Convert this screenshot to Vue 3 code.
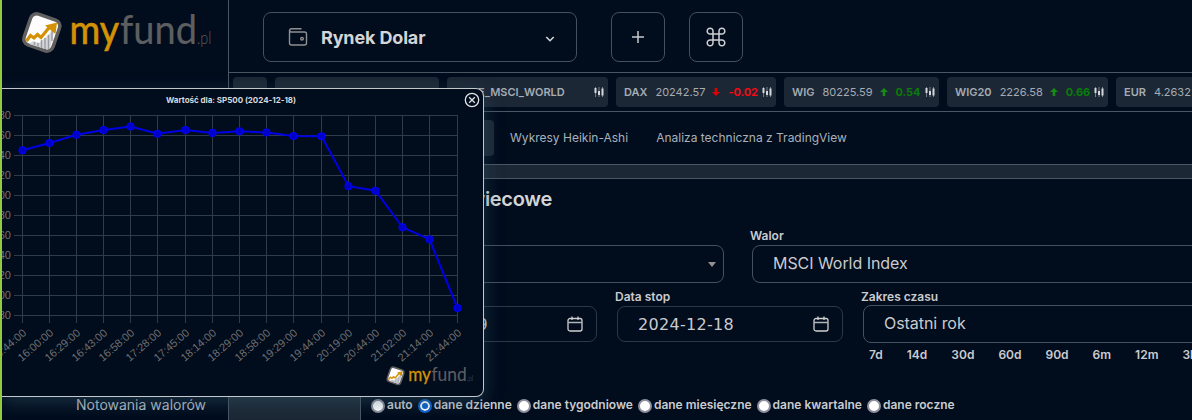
<script setup>
const tickers = [
  { cls: 't1', name: '' },
  { cls: 't2', name: '' },
  { cls: 't3', name: 'E_MSCI_WORLD', icon: true },
  { cls: 't4', name: 'DAX', value: '20242.57', change: '-0.02', down: true, icon: true },
  { cls: 't5', name: 'WIG', value: '80225.59', change: '0.54', icon: true },
  { cls: 't6', name: 'WIG20', value: '2226.58', change: '0.66', icon: true },
  { cls: 't7', name: 'EUR', value: '4.2632' }
]
const ranges = ['7d', '14d', '30d', '60d', '90d', '6m', '12m', '3lata']
const modes = ['auto', 'dane dzienne', 'dane tygodniowe', 'dane miesięczne', 'dane kwartalne', 'dane roczne']

const levels = [6080, 6060, 6040, 6020, 6000, 5980, 5960, 5940, 5920, 5900, 5880]
const points = [
  ['15:44:00', 22.5, 150.3], ['16:00:00', 49.5, 143], ['16:29:00', 76.5, 134.7], ['16:43:00', 103.5, 130],
  ['16:58:00', 130.5, 126.5], ['17:28:00', 157.5, 133.8], ['17:45:00', 185.5, 130], ['18:14:00', 212.5, 132.9],
  ['18:29:00', 239.5, 131.3], ['18:58:00', 266.5, 132.5], ['19:29:00', 293.5, 136], ['19:44:00', 321.5, 136.2],
  ['20:19:00', 348.5, 186.2], ['20:44:00', 375.5, 190.7], ['21:02:00', 402.5, 227.3], ['21:14:00', 429.5, 239.3],
  ['21:44:00', 457.5, 308]
]
const line = points.map(p => p[1] + ',' + p[2]).join(' ')
</script>

<template>
  <div class="page">
    <svg width="0" height="0" class="defs">
      <symbol id="logo" viewBox="0 0 192 50" overflow="visible">
        <g transform="rotate(19 21 24)">
          <rect x="4" y="6.500" width="34" height="36" rx="8" fill="#606060" />
          <rect x="7.500" y="10" width="27" height="29" rx="4.500" fill="#fdfdfd" />
        </g>
        <path d="M8 36 L12 33 L18 35 L25 29 L34 20 L29.500 38 Q28.500 42.500 24 41 Z" fill="#d4d6da" />
        <path d="M13.500 34v3M17 35v3.500M20.500 32v8M24 30v11M27.500 27v14M31 22v11" stroke="#999ca1" stroke-width="1.400" />
        <path d="M5.500 33 L9.500 27.500 L13 30 L16.500 26.500 L20 29.500 L29 18.500" stroke="#d39106" stroke-width="3.200" fill="none" />
        <path d="M24 17.500 L36 14.500 L34.500 26 Z" fill="#d39106" />
        <text class="my" x="48.500" y="36" textLength="49.500" lengthAdjust="spacingAndGlyphs">my</text>
        <text class="fund" x="99" y="36" textLength="77" lengthAdjust="spacingAndGlyphs">fund</text>
        <text class="pl" x="176" y="36" textLength="14.500" lengthAdjust="spacingAndGlyphs">.pl</text>
      </symbol>
      <symbol id="candles" viewBox="0 0 10 10">
        <path d="M1.500 0v10M5 0v10M8.500 0v10" stroke="#8d949c" stroke-width=".8" />
        <path d="M.5 1h2v5h-2zM4 4h2v4h-2zM7.500 1.500h2v7h-2z" fill="#d5d8dc" />
      </symbol>
      <symbol id="calendar" viewBox="0 0 16 16">
        <rect x="1" y="2.500" width="14" height="12.500" rx="2" fill="none" stroke="#d0d0d0" stroke-width="1.300" />
        <path d="M1 6.500h14" stroke="#b0b4b8" stroke-width="1.500" />
        <path d="M5 .5v3.500M11 .5v3.500" stroke="#d0d0d0" stroke-width="1.300" />
      </symbol>
    </svg>

    <aside class="sidebar">
      <svg class="logo" width="192" height="50"><use href="#logo" /></svg>
      <div class="menu-item">Notowania walorów</div>
    </aside>

    <main class="main">
      <header class="header">
        <div class="wallet">
          <svg width="20" height="20" viewBox="0 0 20 20" fill="none" stroke="#8f9091" stroke-width="1.400">
            <path d="M13.500 1.700H3.500a2 2 0 0 0-2 2V16a2 2 0 0 0 2 2h13a2 2 0 0 0 2-2V7a2 2 0 0 0-2-2h-13a1.600 1.600 0 0 1-1.600-1.600" />
            <circle cx="14" cy="11.700" r="1.300" />
          </svg>
          <span>Rynek Dolar</span>
          <svg class="chev" width="10" height="8" viewBox="0 0 10 8"><path d="M1.300 2 5 5.700 8.700 2" fill="none" stroke="#d5d7da" stroke-width="1.600" /></svg>
        </div>
        <div class="square plus">
          <svg width="14" height="14" viewBox="0 0 14 14"><path d="M1 7h12M7 1v12" stroke="#c8c9cb" stroke-width="1.500" /></svg>
        </div>
        <div class="square">
          <svg width="20" height="20" viewBox="0 0 20 20"><path d="M7 7H4.200A2.900 2.900 0 1 1 7 4.200V15.800A2.900 2.900 0 1 1 4.200 13H15.800A2.900 2.900 0 1 1 13 15.800V4.200A2.900 2.900 0 1 1 15.800 7Z" fill="none" stroke="#cfd0d2" stroke-width="1.500" /></svg>
        </div>
      </header>

      <section class="tickers">
        <div v-for="t in tickers" :key="t.cls" class="ticker" :class="t.cls">
          <b>{{ t.name }}</b>
          <span v-if="t.value" class="value">{{ t.value }}</span>
          <svg v-if="t.change" class="arrow" :class="{ down: t.down }" width="8" height="8" viewBox="0 0 8 8"><path d="M4 0 8 4H5.300V8H2.700V4H0Z" /></svg>
          <em v-if="t.change" :class="{ down: t.down }">{{ t.change }}</em>
          <svg v-if="t.icon" class="candles" width="10" height="10"><use href="#candles" /></svg>
        </div>
      </section>

      <nav class="tabs">
        <span class="tab active">Wykresy</span>
        <span class="tab second">Wykresy Heikin-Ashi</span>
        <span class="tab">Analiza techniczna z TradingView</span>
      </nav>
      <div class="band"></div>

      <div class="body">
        <div class="gutter"></div>
        <div class="content">
          <h2>Wykresy świecowe</h2>
          <div class="row first">
            <div class="field f-type">
              <label>&nbsp;</label>
              <div class="select"><i class="caret"></i></div>
            </div>
            <div class="field f-asset">
              <label>Walor</label>
              <div class="select">MSCI World Index</div>
            </div>
          </div>
          <div class="row second-row">
            <div class="field f-start">
              <label>Data start</label>
              <div class="date"><span>2023-12-19</span><svg width="16" height="16"><use href="#calendar" /></svg></div>
            </div>
            <div class="field f-stop">
              <label>Data stop</label>
              <div class="date"><span>2024-12-18</span><svg width="16" height="16"><use href="#calendar" /></svg></div>
            </div>
            <div class="field f-range">
              <label>Zakres czasu</label>
              <div class="select">Ostatni rok</div>
              <div class="chips"><span v-for="r in ranges" :key="r">{{ r }}</span></div>
            </div>
          </div>
          <div class="modes">
            <span v-for="(m, i) in modes" :key="m" class="mode"><i :class="{ on: i === 1 }"></i>{{ m }}</span>
          </div>
        </div>
      </div>
    </main>

    <div class="popup">
      <svg class="chart" width="481" height="307" viewBox="2 89 481 307">
        <text class="title" x="231" y="103" text-anchor="middle" textLength="130">Wartość dla: SP500 (2024-12-18)</text>
        <g class="grid">
          <path v-for="(l, i) in levels" :key="l" :d="`M14 ${115.5 + i * 20}H458`" />
          <path v-for="p in points" :key="p[0]" :d="`M${p[1]} 115V323`" />
        </g>
        <g class="labels">
          <text v-for="(l, i) in levels" :key="l" x="11" :y="118.500 + i * 20" text-anchor="end">{{ l }}</text>
          <text v-for="p in points" :key="p[0]" :transform="`translate(${p[1] + 4.500} 334) rotate(-41)`" text-anchor="end">{{ p[0] }}</text>
        </g>
        <polyline :points="line" fill="none" stroke="#0000e6" stroke-width="2" />
        <circle v-for="p in points" :key="p[0]" :cx="p[1]" :cy="p[2]" r="3.400" fill="#0000c8" stroke="#0000f0" stroke-width="1.300" />
        <g fill="none" stroke="#e2e4e6" stroke-width="1.300">
          <circle cx="472" cy="100" r="6.700" />
          <path d="M469.200 97.200 474.800 102.800M474.800 97.200 469.200 102.800" />
        </g>
        <use href="#logo" x="386" y="364.500" width="88" height="23" />
      </svg>
    </div>
  </div>
</template>

<style>
body { background: #010c1d; overflow: hidden; }
</style>

<style scoped>
* { box-sizing: border-box; }
.page { position: relative; display: flex; width: 1192px; height: 420px; overflow: hidden; background: #010c1d; border-left: 2px solid #93cb40; font-family: Inter, "Noto Sans", sans-serif; color: #c9cbce; }
.defs { position: absolute; }
.my { font: 400 41px Lato, sans-serif; fill: #d39106; stroke: #d39106; stroke-width: .7px; }
.fund { font: 400 41px Lato, sans-serif; fill: #5d5e60; stroke: #5d5e60; stroke-width: .2px; }
.pl { font: 300 17px Lato, sans-serif; fill: #5d5e60; }
.sidebar { width: 227px; height: 420px; flex: none; border-right: 1px solid #4b5563; display: flex; flex-direction: column; justify-content: space-between; }
.logo { margin: 8px 0 0 19px; flex: none; overflow: visible; }
.menu-item { height: 24px; padding-left: 74px; font-size: 14px; line-height: 18px; color: #b4bdc6; white-space: nowrap; }
.main { flex: none; width: 963px; display: flex; flex-direction: column; }
.header { height: 73px; flex: none; border-bottom: 1px solid #4b5563; padding: 12px 0 0 34px; display: flex; }
.wallet { width: 314px; height: 50px; border: 1px solid #454f5d; border-radius: 8px; display: flex; align-items: center; padding: 0 21px 0 24px; font-size: 18px; font-weight: 700; margin-right: 34px; color: #d3d5d7; }
.wallet span { margin-left: 13px; flex: 1; letter-spacing: -.15px; }
.chev { margin-top: 3px; }
.square { width: 54px; height: 50px; border: 1px solid #454f5d; border-radius: 8px; display: flex; align-items: center; justify-content: center; margin-right: 24px; }
.tickers { height: 39px; flex: none; border-bottom: 1px solid #4b5563; display: flex; gap: 8px; padding: 4px 0 0 4px; overflow: hidden; }
.ticker { height: 30px; flex: none; border-radius: 4px; background: #1c2735; display: flex; align-items: center; padding: 0 4px 0 8px; font-size: 11px; color: #a5acb4; white-space: nowrap; }
.ticker b { font-weight: 600; }
.t1 { width: 34px; } .t2 { width: 164px; } .t3 { width: 161px; padding-left: 31px; } .t4 { width: 160px; } .t5 { width: 155px; } .t6 { width: 161px; } .t7 { width: 160px; }
.value { margin-left: 8px; }
.arrow { margin-left: 7px; fill: #168c16; }
.arrow.down { fill: #e00000; transform: rotate(180deg); }
.ticker em { font-style: normal; font-weight: 700; color: #087d08; margin-left: 8px; letter-spacing: -.1px; }
.ticker em.down { color: #f50a12; }
.candles { margin-left: auto; }
.tabs { height: 52px; flex: none; padding-left: 141px; display: flex; align-items: center; font-size: 12px; color: #a9b1b9; }
.tab { height: 36px; line-height: 36px; margin-right: 28px; white-space: nowrap; }
.tab.active { width: 124px; margin-right: 16px; padding-left: 14px; border-radius: 4px; background: #1c2735; }
.band { height: 15px; flex: none; border: 1px solid #4b5563; border-width: 1px 0; background: #1c2735; }
.body { flex: 1; display: flex; }
.gutter { width: 132px; flex: none; background: #1c2735; border-right: 1px solid #4b5563; }
.content { width: 831px; flex: none; display: flex; flex-direction: column; }
h2 { margin: 7px 0 0; width: 191px; height: 26px; line-height: 26px; font-size: 20px; font-weight: 600; letter-spacing: -.3px; text-align: right; white-space: nowrap; color: #d3d5d7; }
.row { display: flex; flex: none; }
.first { margin-top: 15px; height: 57px; }
.first .field { height: 56px; }
.first label { height: 18px; }
.field { flex: none; }
label { display: block; height: 17px; line-height: 17px; font-size: 12px; font-weight: 600; color: #c9cbce; margin-left: -2px; white-space: nowrap; }
.select { height: 38px; border: 1px solid #454f5d; border-radius: 8px; font-size: 16px; line-height: 34px; padding: 0 0 2px 20px; display: flex; justify-content: space-between; align-items: center; letter-spacing: -.05px; }
.caret { margin: 2px 7px 0 auto; border: 4px solid transparent; border-top: 5px solid #93938f; border-bottom: 0; }
.f-type { width: 353px; margin-left: 10px; }
.f-asset { width: 480px; margin-left: 28px; }
.second-row { height: 80px; margin-top: 4px; }
.second-row label { line-height: 17px; }
.f-start { width: 226px; margin-left: 10px; }
.f-stop { width: 226px; margin-left: 20px; }
.f-range { width: 360px; margin-left: 20px; }
.date { height: 36px; margin-top: 1px; border: 1px solid #2d3746; border-radius: 8px; padding: 0 13px 0 20px; display: flex; justify-content: space-between; align-items: center; font: 16px "DejaVu Sans", sans-serif; letter-spacing: .3px; }
.chips { display: flex; font-size: 12px; font-weight: 600; line-height: 16px; margin-top: 4px; padding-left: 6px; gap: 24px; }
.modes { display: flex; margin-top: 29px; padding-left: 10px; font-size: 12px; font-weight: 600; line-height: 16px; white-space: nowrap; gap: 5px; }
.mode { display: flex; align-items: center; }
.mode i { width: 14px; height: 14px; border-radius: 50%; border: 2px solid #8f8f9d; background: #fff; margin: 1px 2px 0 0; }
.mode i.on { border-color: #0b62cf; background: #0b62cf; box-shadow: inset 0 0 0 2px #fff; }
.popup { position: absolute; left: 0; top: 88px; width: 482px; height: 309px; background: #010c1d; border: 1px solid #c4c8cd; border-left: 0; border-radius: 0 8px 8px 0; box-shadow: 0 5px 18px rgba(50, 88, 106, .5); overflow: visible; }
.chart { display: block; }
.title { font-size: 8px; font-weight: 700; fill: #d9dadc; }
.grid path { stroke: #2f3b49; stroke-width: 1; }
.labels { font: 11px "Liberation Sans", sans-serif; fill: #707070; }
</style>
